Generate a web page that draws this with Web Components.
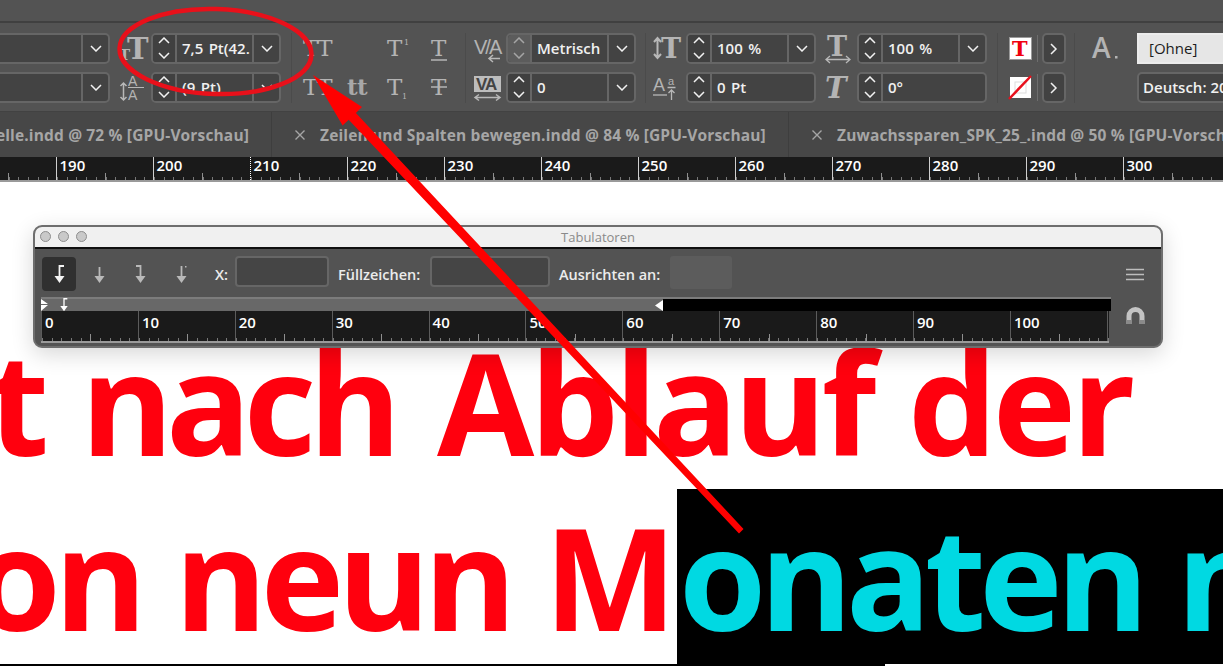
<!DOCTYPE html>
<html lang="de">
<head>
<meta charset="utf-8">
<title>Tabulatoren</title>
<style>
  html, body { margin: 0; height: 100%; background: #fff; overflow: hidden; }
</style>
</head>
<body>
<indesign-window>
  <control-bar>
    <ctl-group style="margin-left:-20px"><num-field nospin></num-field><num-field nospin></num-field></ctl-group>
    <ctl-group gap="5" style="margin-left:10px" sep>
      <ctl-icon name="size"></ctl-icon><ctl-icon name="leading"></ctl-icon>
      <num-field value="7,5 Pt(42."></num-field><num-field value="(9 Pt)"></num-field>
    </ctl-group>
    <ctl-group style="margin-left:11px" sep="16">
      <ctl-icon name="caps" w="44"></ctl-icon><ctl-icon name="smallcaps" w="44"></ctl-icon>
      <ctl-icon name="blank" w="40"></ctl-icon><ctl-icon name="lower" w="40"></ctl-icon>
      <ctl-icon name="sup" w="44"></ctl-icon><ctl-icon name="sub" w="44"></ctl-icon>
      <ctl-icon name="under" w="18"></ctl-icon><ctl-icon name="strike" w="18"></ctl-icon>
    </ctl-group>
    <ctl-group gap="6" style="margin-left:8px" sep="9">
      <ctl-icon name="kern"></ctl-icon><ctl-icon name="track"></ctl-icon>
      <num-field value="Metrisch" muted></num-field><num-field value="0"></num-field>
    </ctl-group>
    <ctl-group gap="5" style="margin-left:7px">
      <ctl-icon name="vscale" w="28"></ctl-icon><ctl-icon name="baseline" w="28"></ctl-icon>
      <num-field value="100 %"></num-field><num-field value="0 Pt" nodrop></num-field>
    </ctl-group>
    <ctl-group gap="6" style="margin-left:9px" sep>
      <ctl-icon name="hscale"></ctl-icon><ctl-icon name="skew"></ctl-icon>
      <num-field value="100 %"></num-field><num-field value="0°" nodrop></num-field>
    </ctl-group>
    <ctl-group style="margin-left:11px" sep="8">
      <ctl-icon name="fill" w="29"></ctl-icon><ctl-icon name="stroke" w="29"></ctl-icon>
      <more-button></more-button><more-button></more-button>
    </ctl-group>
    <ctl-group style="margin-left:18px">
      <ctl-icon name="style" w="44"></ctl-icon><ctl-icon name="blank" w="44"></ctl-icon>
      <text-box light>[Ohne]</text-box><text-box>Deutsch: 2006</text-box>
    </ctl-group>
  </control-bar>
  <tab-bar>
    <doc-tab first>elle.indd @ 72 % [GPU-Vorschau]</doc-tab>
    <doc-tab style="width:517px">Zeilen und Spalten bewegen.indd @ 84 % [GPU-Vorschau]</doc-tab>
    <doc-tab style="width:520px">Zuwachssparen_SPK_25_.indd @ 50 % [GPU-Vorschau]</doc-tab>
  </tab-bar>
  <ruler-strip start="180" cells="13" size="97" offset="-41.5" height="25" mark="210" major="#cfcfcf" lift="3"></ruler-strip>
  <doc-canvas>
    <tab-panel></tab-panel>
  </doc-canvas>
  <markup-overlay></markup-overlay>
</indesign-window>

<script>
const chevron = (dir) => {
  const pts = {
    up: '1,6 6,1 11,6',
    down: '1,1 6,6 11,1',
    right: '1,1 6,6 1,11'
  }[dir];
  const w = dir === 'right' ? 8 : 12;
  const h = dir === 'right' ? 12 : 7;
  return `<svg width="${w}" height="${h}" viewBox="0 0 ${w} ${h}"><polyline points="${pts}" fill="none" stroke="currentColor" stroke-width="1.5"/></svg>`;
};

class IndesignWindow extends HTMLElement {
  constructor() {
    super();
    this.attachShadow({ mode: 'open' }).innerHTML = `
      <style>
        :host { display: flex; flex-direction: column; position: relative; height: 666px; width: 1223px; overflow: hidden;
          font-family: "Open Sans", "Noto Sans", sans-serif; }
      </style>
      <slot></slot>`;
  }
}

class ControlBar extends HTMLElement {
  constructor() {
    super();
    this.attachShadow({ mode: 'open' }).innerHTML = `
      <style>
        :host { display: flex; flex: none; height: 112px; box-sizing: border-box; padding-top: 33px; background: #535353;
          position: relative; border-bottom: 1px solid #424242; overflow: hidden; }
        .top { position: absolute; left: 0; right: 0; top: 21px; height: 2px; background: #404040; }
      </style>
      <div class="top"></div>
      <slot></slot>`;
  }
}

class CtlGroup extends HTMLElement {
  constructor() {
    super();
    const gap = this.getAttribute('gap') || 0;
    const sep = this.hasAttribute('sep') ? (this.getAttribute('sep') || 10) : null;
    this.attachShadow({ mode: 'open' }).innerHTML = `
      <style>
        :host { display: grid; flex: none; grid-auto-flow: column; grid-template-rows: 31px 31px; row-gap: 8px;
          column-gap: ${gap}px; height: 70px; box-sizing: border-box;
          ${sep !== null ? `padding-right:${sep}px;border-right:1px solid #4b4b4b;` : ''} }
      </style>
      <slot></slot>`;
  }
}

class NumField extends HTMLElement {
  constructor() {
    super();
    const value = this.getAttribute('value') || '';
    const spin = !this.hasAttribute('nospin');
    const drop = !this.hasAttribute('nodrop');
    const muted = this.hasAttribute('muted');
    this.attachShadow({ mode: 'open' }).innerHTML = `
      <style>
        :host { display: flex; width: 130px; height: 31px; box-sizing: border-box; border: 2px solid #666; border-radius: 5px;
          background: #434343; color: #f0f0f0; font: 600 15px "Open Sans", sans-serif; overflow: hidden; }
        .spin { width: 24px; flex: none; display: flex; flex-direction: column; align-items: center; justify-content: space-between;
          padding: 2px 0 3px; box-sizing: border-box; border-right: 2px solid #666; color: #f2f2f2; background: #404040; }
        .spin.muted { background: #5c5c5c; color: #a5a5a5; border-right-color: #666; }
        .val { flex: 1; min-width: 0; padding-left: 5px; line-height: 27px; white-space: nowrap; overflow: hidden; word-spacing: 1.500px; }
        .drop { width: 25px; flex: none; display: flex; align-items: center; justify-content: center;
          border-left: 2px solid #666; color: #f2f2f2; }
      </style>
      ${spin ? `<div class="spin${muted ? ' muted' : ''}">${chevron('up')}${chevron('down')}</div>` : ''}
      <div class="val">${value}</div>
      ${drop ? `<div class="drop">${chevron('down')}</div>` : ''}`;
  }
}

class MoreButton extends HTMLElement {
  constructor() {
    super();
    this.attachShadow({ mode: 'open' }).innerHTML = `
      <style>
        :host { display: flex; width: 24px; height: 31px; box-sizing: border-box; align-items: center; justify-content: center;
          border: 2px solid #666; border-radius: 5px; background: #424242; color: #f0f0f0; margin-left: 4px; position: relative; }
        :host::before { content: ""; position: absolute; left: -7px; top: 0; bottom: 0; width: 1px; background: #6e6e6e; }
      </style>
      ${chevron('right')}`;
  }
}

class TextBox extends HTMLElement {
  constructor() {
    super();
    const light = this.hasAttribute('light');
    this.attachShadow({ mode: 'open' }).innerHTML = `
      <style>
        :host { display: block; width: 200px; height: 31px; box-sizing: border-box; padding-left: ${light ? 10 : 4}px;
          border: 2px solid ${light ? '#ececec' : '#666'}; border-radius: ${light ? 0 : 5}px;
          background: ${light ? '#e6e6e6' : '#434343'}; color: ${light ? '#1c1c1c' : '#f0f0f0'};
          font: ${light ? 400 : 600} 15px/27px "Open Sans", sans-serif; white-space: nowrap; }
      </style>
      <slot></slot>`;
  }
}

const serif = 'font-family="DejaVu Serif, serif"';
const ICONS = {
  blank: '',
  size: `<text x="-1" y="27" ${serif} font-size="15" font-weight="700">T</text><text x="7" y="26" ${serif} font-size="29" font-weight="700">T</text>`,
  leading: `<text x="8" y="14" font-family="Liberation Sans" font-size="14">A</text><path d="M8 15.500h16" stroke="#b8b8b8"/><text x="8" y="28" font-family="Liberation Sans" font-size="14">A</text><path d="M3.500 11v17M0.500 14l3-3 3 3M0.500 25l3 3 3-3" fill="none" stroke="#b8b8b8" stroke-width="1.500"/>`,
  caps: `<text x="0" y="23" ${serif} font-size="23" letter-spacing="-1.500">TT</text>`,
  smallcaps: `<text x="0" y="23" ${serif} font-size="23" letter-spacing="-1.500">TT</text>`,
  lower: `<text x="0" y="23" ${serif} font-size="23" font-weight="700" letter-spacing="-.5" fill="#a8a8a8">tt</text>`,
  sup: `<text x="0" y="23" ${serif} font-size="23">T</text><text x="17" y="12" ${serif} font-size="8">1</text>`,
  sub: `<text x="0" y="23" ${serif} font-size="23">T</text><text x="15" y="27" ${serif} font-size="8">1</text>`,
  under: `<text x="0" y="23" ${serif} font-size="23">T</text><path d="M0 27h16" stroke="#b4b4b4" stroke-width="1.500"/>`,
  strike: `<text x="0" y="23" ${serif} font-size="23">T</text><path d="M0 15h16" stroke="#b4b4b4" stroke-width="1.500"/>`,
  kern: `<text x="0" y="21" font-family="Liberation Sans" font-size="20" letter-spacing="-2">V/A</text><path d="M26 25.500h-11M19 22l-4 3.500 4 3.500" fill="none" stroke="#b8b8b8" stroke-width="1.500"/>`,
  track: `<rect x="0" y="4" width="27" height="16" fill="#bdbdbd"/><text x="2" y="18" font-family="Liberation Sans" font-weight="700" font-size="17" letter-spacing="-1" fill="#444">VA</text><path d="M1 25.500h25M5 22.500l-4 3 4 3M22 22.500l4 3-4 3" fill="none" stroke="#b8b8b8" stroke-width="1.500"/>`,
  vscale: `<path d="M4.500 5v20M1 9l3.500-4 3.500 4M1 21l3.500 4 3.500-4" fill="none" stroke="#b8b8b8" stroke-width="2"/><text x="8" y="25" ${serif} font-size="27" font-weight="700">T</text>`,
  baseline: `<text x="0" y="19" font-family="Liberation Sans" font-size="18">A</text><path d="M0 23h14" stroke="#b8b8b8" stroke-width="1.300"/><text x="15" y="13" font-family="Liberation Sans" font-size="11">a</text><path d="M14.500 15.500h8M18.500 28v-9M15.500 21l3-3 3 3" fill="none" stroke="#b8b8b8" stroke-width="1.300"/>`,
  hscale: `<text x="2" y="23" ${serif} font-size="27" font-weight="700">T</text><path d="M1 26.500h24M5 23l-4 3.500 4 3.500M21 23l4 3.500-4 3.500" fill="none" stroke="#b8b8b8" stroke-width="1.300"/>`,
  skew: `<text x="0" y="26" ${serif} font-size="29" font-weight="700" font-style="italic">T</text>`,
  fill: `<rect x="0.500" y="4.500" width="22" height="22" fill="#fff" stroke="#9a9a9a"/><text x="3" y="23" ${serif} font-size="21" font-weight="700" fill="#f0000e">T</text>`,
  stroke: `<rect x="1" y="5" width="21" height="21" fill="#fff"/><rect x="6" y="10" width="11" height="11" fill="none" stroke="#ddd"/><path d="M0 27L22 4" stroke="#e8101c" stroke-width="2.500"/>`,
  style: `<text x="-1" y="25" font-family="Open Sans" font-weight="600" font-size="28">A</text><rect x="22" y="23" width="2.500" height="2.500"/>`
};

class CtlIcon extends HTMLElement {
  constructor() {
    super();
    const w = this.getAttribute('w') || 26;
    this.attachShadow({ mode: 'open' }).innerHTML = `
      <style>
        :host { display: block; width: ${w}px; height: 31px; }
        svg { display: block; overflow: visible; fill: #b4b4b4; }
      </style>
      <svg width="${w}" height="31">${ICONS[this.getAttribute('name')]}</svg>`;
  }
}

class TabBar extends HTMLElement {
  constructor() {
    super();
    this.attachShadow({ mode: 'open' }).innerHTML = `
      <style>
        :host { display: flex; flex: none; height: 45px; background: #474747; overflow: hidden; }
      </style>
      <slot></slot>`;
  }
}

class DocTab extends HTMLElement {
  constructor() {
    super();
    const first = this.hasAttribute('first');
    this.attachShadow({ mode: 'open' }).innerHTML = `
      <style>
        :host { display: flex; flex: none; box-sizing: border-box; align-items: center; white-space: nowrap; overflow: hidden;
          height: 45px; border-right: 1px solid #3e3e3e; color: #a6a6a6; font: 700 15.500px "Open Sans", sans-serif; letter-spacing: .15px;
          ${first ? 'width:272px;justify-content:flex-end;padding-right:22px;' : 'padding-left:23px;'} }
        svg { margin-right: 15px; flex: none; }
      </style>
      ${first ? '' : '<svg width="10" height="10" viewBox="0 0 10 10"><path d="M0.500 0.500l9 9M9.500 0.500l-9 9" stroke="#a6a6a6" stroke-width="1.400"/></svg>'}
      <span><slot></slot></span>`;
  }
}

class RulerStrip extends HTMLElement {
  constructor() {
    super();
    const start = +this.getAttribute('start');
    const cells = +this.getAttribute('cells');
    const size = +this.getAttribute('size');
    const offset = this.getAttribute('offset') || 0;
    const height = +this.getAttribute('height');
    const mark = this.getAttribute('mark');
    const width = this.getAttribute('width');
    const major = this.getAttribute('major') || '#5c5c5c';
    const lift = this.getAttribute('lift') || 2;
    let html = '';
    for (let i = 0; i < cells; i++) {
      const n = start + i * 10;
      html += `<div class="cell${String(n) === mark ? ' mark' : ''}"><span>${n}</span></div>`;
    }
    this.attachShadow({ mode: 'open' }).innerHTML = `
      <style>
        :host { display: flex; flex: none; height: ${height}px; box-sizing: border-box; ${width ? `width:${width}px;` : ''} background: #1a1a1a;
          overflow: hidden; border-bottom: 2px solid #9a9a9a; }
        .cell { flex: none; width: ${size}px; box-sizing: border-box; border-left: 1px solid ${major}; position: relative;
          color: #fff; font: 600 15px/${height - 2}px "Open Sans", sans-serif; padding-left: 3px;
          background:
            linear-gradient(#8f8f8f, #8f8f8f) ${size / 2}px 100% / 1px 7px no-repeat,
            repeating-linear-gradient(90deg, #777 0 1px, transparent 1px ${size / 10}px) 0 100% / 100% 3px no-repeat; }
        .cell.mark { border-left: 1px dotted #fff; }
        span { position: relative; top: -${lift}px; }
        .cell:first-of-type { margin-left: ${offset}px; }
      </style>
      ${html}`;
  }
}

class DocCanvas extends HTMLElement {
  constructor() {
    super();
    this.attachShadow({ mode: 'open' }).innerHTML = `
      <style>
        :host { display: block; flex: 1; position: relative; overflow: hidden; background: #fff; padding-top: 132px;
          color: #ff000e; font: 700 141px/175px "Open Sans", sans-serif; white-space: nowrap; }
        .line { display: block; height: 175px; letter-spacing: -6.500px; word-spacing: 4px; }
        .one { margin-left: -12px; }
        .nach { margin-left: 4px; letter-spacing: -7.500px; }
        .abl { margin-left: 9px; letter-spacing: -4.500px; }
        .two { margin-left: -26.500px; display: flex; }
        .lead { flex: none; width: 703.500px; }
        .sel { display: block; flex: 1; background: #000; color: #00d9e2; padding-left: 2px; overflow: hidden; }
        .third { width: 885px; background: #000; }
        ::slotted(tab-panel) { position: absolute; left: 33px; top: 43px; }
      </style>
      <div class="line one">t <span class="nach">nach</span> <span class="abl">Ablauf der</span></div>
      <div class="line two"><span class="lead">on neun M</span><span class="sel">onaten nach</span></div>
      <div class="line third"></div>
      <slot></slot>`;
  }
}

const TAB_ARROWS = {
  left: '<path d="M11 1H6.500v10" fill="none" stroke="currentColor" stroke-width="1.800"/><path d="M1.500 11h10L6.500 18z" fill="currentColor"/>',
  center: '<path d="M6.500 2v10" fill="none" stroke="currentColor" stroke-width="1.800"/><path d="M1.500 11h10L6.500 18z" fill="currentColor"/>',
  right: '<path d="M2 1h4.500v10" fill="none" stroke="currentColor" stroke-width="1.800"/><path d="M1.500 11h10L6.500 18z" fill="currentColor"/>',
  decimal: '<path d="M6.500 1v11" fill="none" stroke="currentColor" stroke-width="1.800"/><path d="M1.500 11h10L6.500 18z" fill="currentColor"/><rect x="10" y="1" width="1.500" height="1.500" fill="currentColor"/>'
};
const tabIcon = (k) => `<svg width="13" height="19" viewBox="0 0 13 19">${TAB_ARROWS[k]}</svg>`;

class TabPanel extends HTMLElement {
  constructor() {
    super();
    this.attachShadow({ mode: 'open' }).innerHTML = `
      <style>
        :host { display: block; width: 1130px; height: 123px; box-sizing: border-box; border: 2px solid #6e6e6e; border-radius: 9px;
          background: #535353; overflow: hidden; box-shadow: 0 6px 22px rgba(0,0,0,.16); font: 600 14.500px "Open Sans", sans-serif; color: #ececec; }
        .title { height: 22px; box-sizing: border-box; background: #f0f0f0; border-bottom: 2px solid #111; position: relative; display: flex; align-items: center;
          justify-content: center; color: #8a8a8a; font: 400 13px "Open Sans", sans-serif; }
        .lights { position: absolute; left: 5px; top: 4px; display: flex; gap: 7px; }
        .lights i { width: 9px; height: 9px; border-radius: 50%; border: 1px solid #8d8d8d; background: #c9c9c9; }
        .body { display: grid; grid-template-columns: 1070px 1fr; padding-left: 6px; }
        .tools { display: flex; align-items: center; height: 48px; box-sizing: border-box; padding-top: 2px; }
        .active { width: 34px; height: 34px; margin: 0 3px 0 1px; border-radius: 4px; background: #303030; color: #f4f4f4;
          display: flex; align-items: center; justify-content: center; }
        .t { width: 41px; display: flex; justify-content: center; color: #b9b9b9; }
        .input { height: 31px; box-sizing: border-box; border: 2px solid #666; border-radius: 4px; background: #454545; margin: -5px 9px 0 5px; }
        .box { height: 33px; width: 62px; background: #5c5c5c; border-radius: 3px; margin: -4px 0 0 5px; }
        .strip { height: 14px; box-sizing: border-box; border-top: 2px solid #7c7c7c; background: linear-gradient(90deg, #686868 622px, #000 622px);
          position: relative; }
        .strip svg { position: absolute; top: -1px; }
        .side { display: flex; flex-direction: column; align-items: center; padding: 19px 0 0 0; margin-left: -2px; }
        .side svg { display: block; }
      </style>
      <div class="title"><div class="lights"><i></i><i></i><i></i></div>Tabulatoren</div>
      <div class="body">
        <div>
          <div class="tools">
            <div class="active">${tabIcon('left')}</div>
            <div class="t">${tabIcon('center')}</div>
            <div class="t">${tabIcon('right')}</div>
            <div class="t">${tabIcon('decimal')}</div>
            <span style="margin-left:13px;width:15px">X:</span><div class="input" style="width:94px"></div>
            <span style="width:87px">Füllzeichen:</span><div class="input" style="width:120px"></div>
            <span style="width:106px">Ausrichten an:</span><div class="box"></div>
          </div>
          <div class="strip">
            <svg style="left:0" width="8" height="14"><path d="M0 1l7 5-7 0zM0 7l7 0-7 6z" fill="#fff"/></svg>
            <svg style="left:18px" width="10" height="14" viewBox="0 0 13 19">${TAB_ARROWS.left.replace(/currentColor/g, '#fff')}</svg>
            <svg style="left:614px" width="8" height="14"><path d="M8 2v11L0 7.500z" fill="#fff"/></svg>
          </div>
          <ruler-strip start="0" cells="12" size="96.9" height="32" width="1068" lift="4"></ruler-strip>
        </div>
        <div class="side">
          <svg width="20" height="13" viewBox="0 0 20 13"><path d="M1 1.500h18M1 6.500h18M1 11.500h18" stroke="#bdbdbd" stroke-width="1.500"/></svg>
          <svg style="margin-top:25px" width="19" height="19" viewBox="0 0 19 19"><path d="M3 18V10a6.500 6.500 0 0 1 13 0v8" fill="none" stroke="#c4c4c4" stroke-width="5"/><path d="M0.500 14h5v4h-5zM13.500 14h5v4h-5z" fill="#8a8a8a"/></svg>
        </div>
      </div>`;
  }
}

class MarkupOverlay extends HTMLElement {
  constructor() {
    super();
    this.attachShadow({ mode: 'open' }).innerHTML = `
      <style>
        :host { position: absolute; inset: 0; display: block; pointer-events: none; }
        svg { display: block; }
      </style>
      <svg width="1223" height="666" viewBox="0 0 1223 666">
        <ellipse cx="215.500" cy="51.500" rx="96" ry="42.500" transform="rotate(2 215.500 51.500)" fill="none" stroke="#e9101a" stroke-width="4.500"/>
        <path d="M313 75L362 107 355.900 112.900 743.500 529 739 533.500 348.700 119.700 342.600 125.500Z" fill="#ff0000"/>
      </svg>`;
  }
}

customElements.define('indesign-window', IndesignWindow);
customElements.define('control-bar', ControlBar);
customElements.define('ctl-group', CtlGroup);
customElements.define('num-field', NumField);
customElements.define('more-button', MoreButton);
customElements.define('text-box', TextBox);
customElements.define('ctl-icon', CtlIcon);
customElements.define('tab-bar', TabBar);
customElements.define('doc-tab', DocTab);
customElements.define('ruler-strip', RulerStrip);
customElements.define('doc-canvas', DocCanvas);
customElements.define('tab-panel', TabPanel);
customElements.define('markup-overlay', MarkupOverlay);
</script>
</body>
</html>
